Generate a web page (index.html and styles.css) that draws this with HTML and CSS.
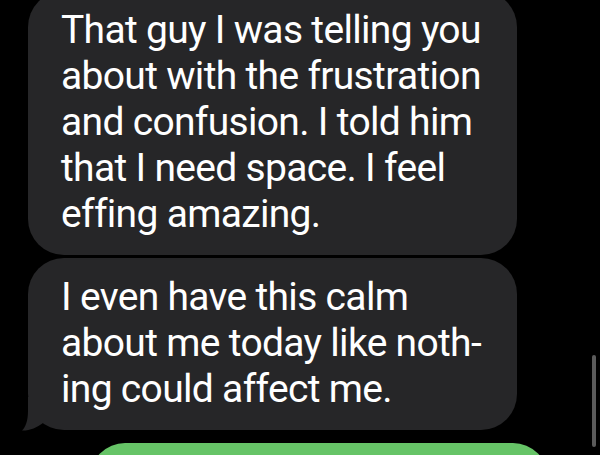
FILE: index.html
```
<html>
<head>
<title>Messages</title>
<link rel="stylesheet" href="styles.css">
</head>
<body>

<div class="thread">
  <div class="bubble in first">That guy I was telling you<br>about with the frustration<br>and confusion. I told him<br>that I need space. I feel<br>effing amazing.</div>
  <div class="bubble in last">I even have this calm<br>about me today like noth-<br>ing could affect me.
    <svg class="tail" width="30" height="34" viewBox="0 0 30 34"><path d="M6 0 L6 14 C6 24 3.5 30 0 33.6 C8 33.8 15 30.5 21 26 L21 0 Z" fill="#262628"/></svg>
  </div>
  <div class="bubble out"></div>
</div>

<div class="scroll"></div>

</body>
</html>
```
FILE: styles.css
```
body		{margin:0;background:#000;overflow:hidden;height:455px;
		 font-family:Roboto,"Liberation Sans",Arial,sans-serif;}
.thread		{display:flex;flex-direction:column;margin-top:-9px;}
.bubble		{color:#fff;font-size:39px;line-height:46px;letter-spacing:-0.68px;}
.in		{background:#262628;width:456px;margin-left:28px;
		 padding:16px 0 18px 33px;border-radius:36px;position:relative;}
.first		{margin-bottom:3px;}
.tail		{position:absolute;left:-6px;bottom:-1px;display:block;}
.out		{background:#66c467;width:458px;height:70px;margin:13px 0 0 90px;border-radius:36px;}
.scroll		{position:absolute;left:592px;top:355px;width:4px;height:92px;
		 background:#5b5b5b;border-radius:2px;}
```
